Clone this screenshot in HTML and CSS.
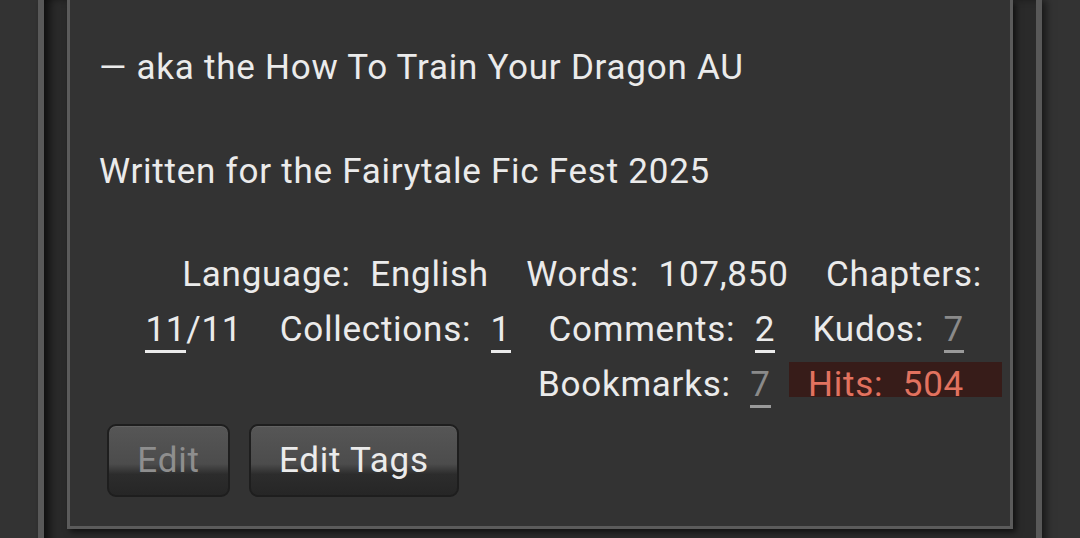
FILE: index.html
```html
<!DOCTYPE html>
<html lang="en">
<head>
    <meta charset="UTF-8">
    <meta name="viewport" content="width=device-width, initial-scale=1.0">
    <title>Work blurb</title>

    <link rel="stylesheet" href="styles.css">
</head>
<body>
    <div class="outer">
        <div class="card">
            <div class="summary">
                <p>— aka the How To Train Your Dragon AU</p>
                <p>Written for the Fairytale Fic Fest 2025</p>
            </div>

            <dl class="stats">
                <div class="stat"><dt>Language:</dt> <dd>English</dd></div>
                <div class="stat"><dt>Words:</dt> <dd>107,850</dd></div>
                <div class="stat"><dt>Chapters:</dt> <dd><a href="#">11</a>/11</dd></div>
                <div class="stat"><dt>Collections:</dt> <dd><a href="#">1</a></dd></div>
                <div class="stat"><dt>Comments:</dt> <dd><a href="#">2</a></dd></div>
                <div class="stat"><dt>Kudos:</dt> <dd><a class="muted" href="#">7</a></dd></div>
                <div class="stat"><dt>Bookmarks:</dt> <dd><a class="muted" href="#">7</a></dd></div>
                <div class="stat hits"><dt>Hits:</dt> <dd>504</dd></div>
            </dl>

            <ul class="actions">
                <li><button class="btn" disabled>Edit</button></li>
                <li><button class="btn">Edit Tags</button></li>
            </ul>
        </div>
    </div>
</body>
</html>
```

FILE: styles.css
```css
body {
    font-family: Roboto, 'Liberation Sans', sans-serif;
    font-size: 35px;
    letter-spacing: 0.75px;
    color: #ebebeb;
    background-color: #333;
    margin: 0;
    padding: 0;
    overflow: hidden;
    height: 100vh;
}

.outer {
    margin-left: 38px;
    width: 992px;
    min-height: 560px;
    background-color: #2a2a2a;
    border-left: 6px solid #585858;
    border-right: 6px solid #585858;
    box-shadow: 4px 0 8px rgba(0, 0, 0, 0.55), inset 8px 0 10px -3px rgba(0, 0, 0, 0.7);
    padding-bottom: 30px;
}

.card {
    margin: 0 23px;
    background-color: #333;
    border: 3px solid #5b5b5b;
    border-top: 0;
    box-shadow: 3px 3px 6px rgba(0, 0, 0, 0.6);
    padding: 42px 28px 29px 29px;
}

.summary p {
    margin: 0 0 51px;
    line-height: 52.5px;
}

.summary p:last-child {
    margin-bottom: 49px;
}

.stats {
    margin: 0;
    text-align: right;
    line-height: 55px;
}

.stat {
    display: inline;
}

dt {
    display: inline;
    margin-left: 10px;
}

dd {
    display: inline;
    margin: 0 18px 0 10px;
}

.stats a {
    color: #ebebeb;
    text-decoration: none;
    border-bottom: 3px solid #ebebeb;
}

.stats a.muted {
    color: #8a8a8a;
    border-bottom-color: #9a9a9a;
}

.hits {
    display: inline-block;
    box-sizing: border-box;
    height: 35px;
    line-height: 35px;
    padding: 5px 20px 0 19px;
    margin-left: -9px;
    margin-right: -20px;
    background-color: #371c19;
    color: #e2725f;
}

.hits dt {
    margin-left: 0;
}

.actions {
    list-style: none;
    margin: 12px 0 0;
    padding: 0 0 0 8px;
    display: flex;
    gap: 19px;
}

.btn {
    font-family: Roboto, 'Liberation Sans', sans-serif;
    font-size: 35px;
    letter-spacing: 0.75px;
    line-height: 40px;
    color: #ebebeb;
    min-width: 123px;
    padding: 15px 28px 14px;
    border: 2px solid #1e1e1e;
    border-radius: 9px;
    background: linear-gradient(to bottom, #565656 0%, #4c4c4c 55%, #2c2c2c 70%, #262626 100%);
    box-shadow: inset 0 1px 0 rgba(255, 255, 255, 0.08);
    cursor: pointer;
}

.btn:disabled {
    color: #8e8e8e;
    cursor: default;
}
```
